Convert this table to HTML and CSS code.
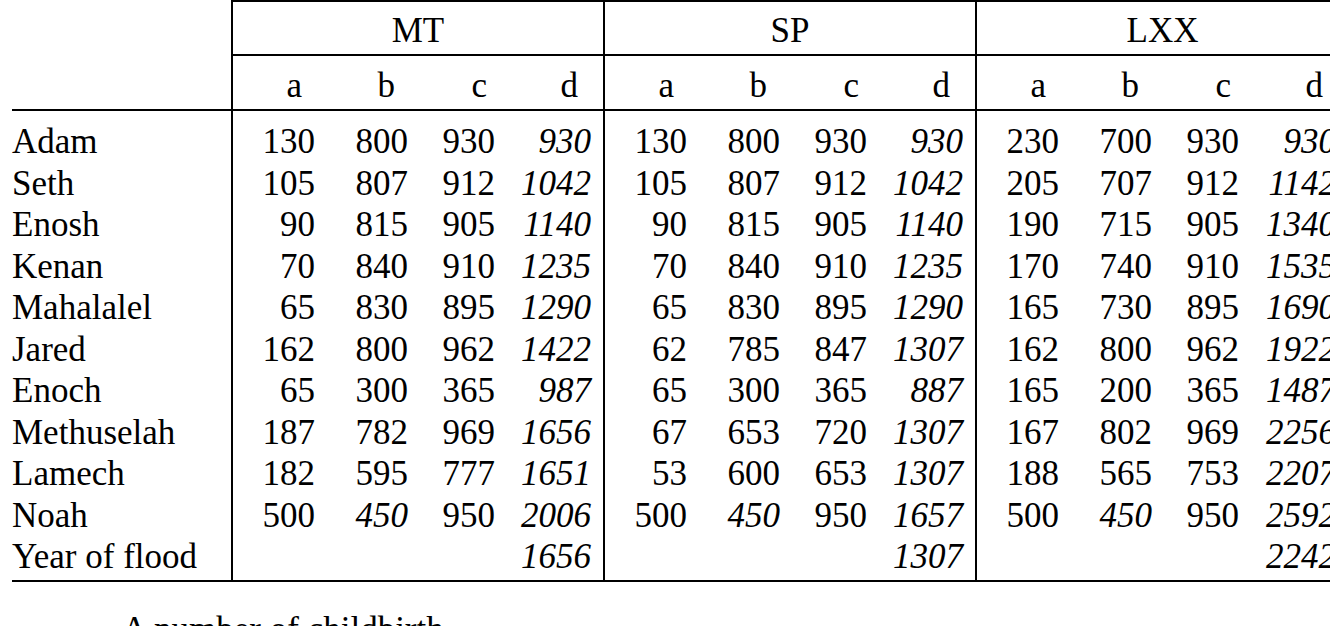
FILE: index.html
```html
<!DOCTYPE html>
<html lang="en">
<head>
<meta charset="utf-8">
<title>Ages of the patriarchs</title>
<link rel="stylesheet" href="styles.css">
</head>
<body>
<div class="page">
  <table class="ages">
    <colgroup>
      <col class="c-name">
      <col class="c-a"><col class="c-b"><col class="c-c"><col class="c-d">
      <col class="c-a"><col class="c-b"><col class="c-c"><col class="c-d">
      <col class="c-a"><col class="c-b"><col class="c-c"><col class="c-d">
    </colgroup>
    <thead>
      <tr class="groups">
        <th class="corner" rowspan="2"></th>
        <th class="group" colspan="4">MT</th>
        <th class="group" colspan="4">SP</th>
        <th class="group" colspan="4">LXX</th>
      </tr>
      <tr class="subs">
        <th class="sub first">a</th><th class="sub">b</th><th class="sub sub-c">c</th><th class="sub">d</th>
        <th class="sub first">a</th><th class="sub">b</th><th class="sub sub-c">c</th><th class="sub">d</th>
        <th class="sub first">a</th><th class="sub">b</th><th class="sub sub-c">c</th><th class="sub">d</th>
      </tr>
    </thead>
    <tbody>
      <tr><td class="name">Adam</td>
        <td class="num first">130</td><td class="num">800</td><td class="num">930</td><td class="num it">930</td>
        <td class="num first">130</td><td class="num">800</td><td class="num">930</td><td class="num it">930</td>
        <td class="num first">230</td><td class="num">700</td><td class="num">930</td><td class="num it">930</td></tr>
      <tr><td class="name">Seth</td>
        <td class="num first">105</td><td class="num">807</td><td class="num">912</td><td class="num it">1042</td>
        <td class="num first">105</td><td class="num">807</td><td class="num">912</td><td class="num it">1042</td>
        <td class="num first">205</td><td class="num">707</td><td class="num">912</td><td class="num it">1142</td></tr>
      <tr><td class="name">Enosh</td>
        <td class="num first">90</td><td class="num">815</td><td class="num">905</td><td class="num it">1140</td>
        <td class="num first">90</td><td class="num">815</td><td class="num">905</td><td class="num it">1140</td>
        <td class="num first">190</td><td class="num">715</td><td class="num">905</td><td class="num it">1340</td></tr>
      <tr><td class="name">Kenan</td>
        <td class="num first">70</td><td class="num">840</td><td class="num">910</td><td class="num it">1235</td>
        <td class="num first">70</td><td class="num">840</td><td class="num">910</td><td class="num it">1235</td>
        <td class="num first">170</td><td class="num">740</td><td class="num">910</td><td class="num it">1535</td></tr>
      <tr><td class="name">Mahalalel</td>
        <td class="num first">65</td><td class="num">830</td><td class="num">895</td><td class="num it">1290</td>
        <td class="num first">65</td><td class="num">830</td><td class="num">895</td><td class="num it">1290</td>
        <td class="num first">165</td><td class="num">730</td><td class="num">895</td><td class="num it">1690</td></tr>
      <tr><td class="name">Jared</td>
        <td class="num first">162</td><td class="num">800</td><td class="num">962</td><td class="num it">1422</td>
        <td class="num first">62</td><td class="num">785</td><td class="num">847</td><td class="num it">1307</td>
        <td class="num first">162</td><td class="num">800</td><td class="num">962</td><td class="num it">1922</td></tr>
      <tr><td class="name">Enoch</td>
        <td class="num first">65</td><td class="num">300</td><td class="num">365</td><td class="num it">987</td>
        <td class="num first">65</td><td class="num">300</td><td class="num">365</td><td class="num it">887</td>
        <td class="num first">165</td><td class="num">200</td><td class="num">365</td><td class="num it">1487</td></tr>
      <tr><td class="name">Methuselah</td>
        <td class="num first">187</td><td class="num">782</td><td class="num">969</td><td class="num it">1656</td>
        <td class="num first">67</td><td class="num">653</td><td class="num">720</td><td class="num it">1307</td>
        <td class="num first">167</td><td class="num">802</td><td class="num">969</td><td class="num it">2256</td></tr>
      <tr><td class="name">Lamech</td>
        <td class="num first">182</td><td class="num">595</td><td class="num">777</td><td class="num it">1651</td>
        <td class="num first">53</td><td class="num">600</td><td class="num">653</td><td class="num it">1307</td>
        <td class="num first">188</td><td class="num">565</td><td class="num">753</td><td class="num it">2207</td></tr>
      <tr><td class="name">Noah</td>
        <td class="num first">500</td><td class="num it">450</td><td class="num">950</td><td class="num it">2006</td>
        <td class="num first">500</td><td class="num it">450</td><td class="num">950</td><td class="num it">1657</td>
        <td class="num first">500</td><td class="num it">450</td><td class="num">950</td><td class="num it">2592</td></tr>
      <tr><td class="name">Year of flood</td>
        <td class="num first"></td><td class="num"></td><td class="num"></td><td class="num it">1656</td>
        <td class="num first"></td><td class="num"></td><td class="num"></td><td class="num it">1307</td>
        <td class="num first"></td><td class="num"></td><td class="num"></td><td class="num it">2242</td></tr>
    </tbody>
  </table>
  <p class="note">A number of childbirth</p>
</div>
</body>
</html>
```

FILE: styles.css
```css
html, body {
  margin: 0;
  padding: 0;
  background: #ffffff;
  overflow: hidden;
}

.page {
  width: 1330px;
  height: 626px;
  overflow: hidden;
  padding-left: 12px;
  box-sizing: border-box;
  font-family: "Liberation Serif", "Times New Roman", serif;
  font-size: 35px;
  color: #000000;
}

.ages {
  border-collapse: collapse;
  table-layout: fixed;
  width: 1336px;
  line-height: 41.5px;
}

.c-name { width: 220px; }
.c-a { width: 95px; }
.c-b { width: 93px; }
.c-c { width: 87px; }
.c-d { width: 97px; }

th, td {
  padding: 0;
  font-weight: normal;
  white-space: nowrap;
}

.ages .corner {
  border-right: 2px solid #000;
  border-bottom: 2px solid #000;
}

.ages .group {
  text-align: center;
  border-top: 2px solid #000;
  border-left: 2px solid #000;
  border-bottom: 2px solid #000;
  padding-top: 8px;
  padding-bottom: 2px;
}

.ages .sub {
  text-align: right;
  padding-right: 25px;
  padding-top: 9px;
  padding-bottom: 3px;
  border-bottom: 2px solid #000;
}

.ages .sub.sub-c {
  padding-right: 20px;
}

.ages .sub.first,
.ages .num.first {
  border-left: 2px solid #000;
}

.ages .name {
  text-align: left;
  border-right: 2px solid #000;
}

.ages .num {
  text-align: right;
  padding-right: 12px;
}

.ages .it {
  font-style: italic;
}

.ages tbody tr:first-child td {
  padding-top: 10px;
}

.ages tbody tr:last-child td {
  padding-bottom: 2px;
  border-bottom: 2px solid #000;
}

.note {
  margin: 27px 0 0 110px;
  line-height: 41.5px;
}
```
